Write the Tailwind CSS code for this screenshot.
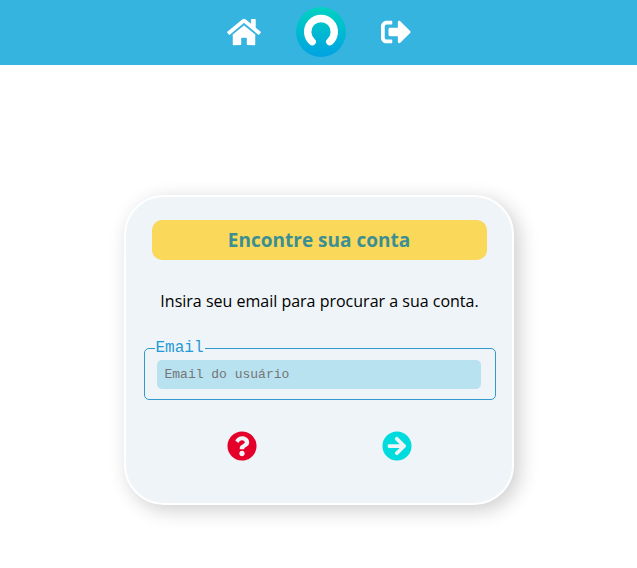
<!DOCTYPE html>
<html lang="pt-BR">
<head>
<meta charset="utf-8">
<meta name="viewport" content="width=device-width, initial-scale=1">
<title>Encontre sua conta</title>
<script src="https://cdn.jsdelivr.net/npm/@tailwindcss/browser@4"></script>
</head>
<body class="flex min-h-screen flex-col bg-white font-['Segoe_UI','Open_Sans',sans-serif] text-black">
<header class="bg-[#36b4e0]">
  <nav class="flex h-[65px] items-center justify-center gap-[35px] pb-px text-white" aria-label="Principal">
    <a href="#" aria-label="Início"><svg class="h-[30px] w-[34px]" viewBox="0 0 576 512" fill="currentColor"><path d="M280.37 148.26L96 300.11V464a16 16 0 0 0 16 16l112.06-.29a16 16 0 0 0 15.92-16V368a16 16 0 0 1 16-16h64a16 16 0 0 1 16 16v95.64a16 16 0 0 0 16 16.05L464 480a16 16 0 0 0 16-16V300L295.67 148.26a12.19 12.19 0 0 0-15.3 0zM571.6 251.47L488 182.56V44.05a12 12 0 0 0-12-12h-56a12 12 0 0 0-12 12v72.61L318.47 43a48 48 0 0 0-61 0L4.34 251.47a12 12 0 0 0-1.6 16.9l25.5 31A12 12 0 0 0 45.15 301l235.22-193.74a12.19 12.19 0 0 1 15.3 0L530.9 301a12 12 0 0 0 16.9-1.6l25.5-31a12 12 0 0 0-1.7-16.93z"/></svg></a>
    <a href="#" aria-label="Perfil"><svg class="size-[50px]" viewBox="0 0 50 50" fill="none"><defs><linearGradient id="logo" x1="0" y1="0" x2="0" y2="1"><stop offset="0" stop-color="#00d2c0"/><stop offset="1" stop-color="#00a2e2"/></linearGradient></defs><circle cx="25" cy="25" r="25" fill="url(#logo)"/><path d="M16.2 34.7A13.3 13.3 0 1 1 33.8 34.7" stroke="#fff" stroke-width="7.4" stroke-linecap="round"/></svg></a>
    <a href="#" aria-label="Sair"><svg class="size-[30px]" viewBox="0 0 512 512" fill="currentColor"><path d="M497 273L329 441c-15 15-41 4.5-41-17v-96H152c-13.3 0-24-10.7-24-24v-96c0-13.3 10.7-24 24-24h136V88c0-21.4 25.9-32 41-17l168 168c9.3 9.4 9.3 24.6 0 34zM192 436v-40c0-6.6-5.4-12-12-12H96c-17.7 0-32-14.3-32-32V160c0-17.7 14.3-32 32-32h84c6.6 0 12-5.4 12-12V76c0-6.6-5.4-12-12-12H96c-53 0-96 43-96 96v192c0 53 43 96 96 96h84c6.6 0 12-5.4 12-12z"/></svg></a>
  </nav>
</header>
<main class="flex grow justify-center px-4 pt-[130px] pb-8">
  <form class="w-full max-w-[390px] self-start rounded-[40px] border-2 border-white bg-[#eef4f7] pt-[23px] pr-4 pb-[42px] pl-[18px] shadow-[5px_5px_20px_rgba(0,0,0,0.2)]">
    <h1 class="mr-[9px] ml-2 rounded-[10px] bg-[#f9d85a] pt-px text-center text-[19px] leading-[39px] font-bold text-[#3b8f93]">Encontre sua conta</h1>
    <p class="mt-[29px] text-center text-[16px] leading-6">Insira seu email para procurar a sua conta.</p>
    <fieldset class="mt-[27px] rounded-[5px] border border-[#3399cc] pr-[14px] pb-[10px] pl-[12px]">
      <legend class="-ml-[2px] px-px font-['Liberation_Mono',monospace] text-[16px] leading-4 text-[#1f9bd7]"><label for="email">Email</label></legend>
      <input id="email" type="email" placeholder="Email do usuário" class="mt-1 block h-[29px] w-full rounded-[5px] bg-[#b8e2f0] px-2 font-['Liberation_Mono',monospace] text-[13px] text-[#333] outline-none placeholder:text-[#757575]">
    </fieldset>
    <div class="mt-[31px] flex justify-center gap-[125px]">
      <button type="button" aria-label="Ajuda" class="text-[#e4002b]"><svg class="size-[30px]" viewBox="0 0 512 512" fill="currentColor"><path d="M504 256c0 136.997-111.043 248-248 248S8 392.997 8 256C8 119.083 119.043 8 256 8s248 111.083 248 248zM262.655 90c-54.497 0-89.255 22.957-116.549 63.758-3.536 5.286-2.353 12.415 2.715 16.258l34.699 26.31c5.205 3.947 12.621 3.008 16.665-2.122 17.864-22.658 30.113-35.797 57.303-35.797 20.429 0 45.698 13.148 45.698 32.958 0 14.976-12.363 22.667-32.534 33.976C247.128 238.528 216 254.941 216 296v4c0 6.627 5.373 12 12 12h56c6.627 0 12-5.373 12-12v-1.333c0-28.462 83.186-29.647 83.186-106.667 0-58.002-60.165-102-116.531-102zM256 338c-25.365 0-46 20.635-46 46 0 25.364 20.635 46 46 46s46-20.636 46-46c0-25.365-20.635-46-46-46z"/></svg></button>
      <button type="submit" aria-label="Continuar" class="text-[#00dbde]"><svg class="size-[30px]" viewBox="0 0 512 512" fill="currentColor"><path d="M256 8c137 0 248 111 248 248S393 504 256 504 8 393 8 256 119 8 256 8zm-28.9 143.6l75.5 72.4H120c-13.3 0-24 10.7-24 24v16c0 13.3 10.7 24 24 24h182.6l-75.5 72.4c-9.7 9.3-9.9 24.8-.4 34.3l11 10.9c9.4 9.4 24.6 9.4 33.9 0L404.3 273c9.4-9.4 9.4-24.6 0-33.9L271.6 106.3c-9.4-9.4-24.6-9.4-33.9 0l-11 10.9c-9.5 9.6-9.3 25.1.4 34.4z"/></svg></button>
    </div>
  </form>
</main>
</body>
</html>
